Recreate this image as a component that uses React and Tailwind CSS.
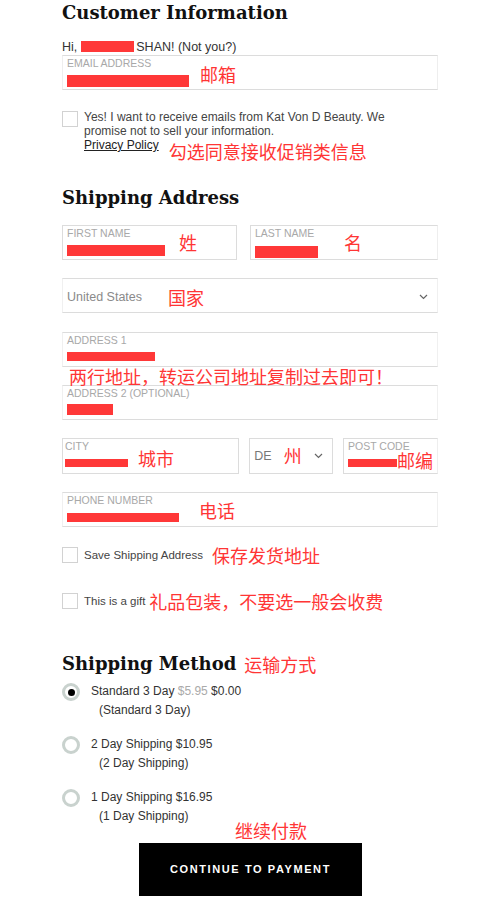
import React from 'react';

const cjk = { fontFamily: '"Noto Sans CJK SC", sans-serif' };

// red annotation written on top of the screenshot
const Note = ({ className = '', children }) => (
  <span className={`whitespace-nowrap text-[18px] leading-[18px] text-[#ff3535] shrink-0 ${className}`} style={cjk}>
    {children}
  </span>
);

// red redaction bar
const Bar = ({ className = '' }) => <span className={`inline-block bg-[#ff3838] shrink-0 ${className}`} />;

const Field = ({ label, className = '', rowClass = '', children }) => (
  <div className={`h-[35px] border border-[#dcdcdc] flex flex-col px-[4px] ${className}`}>
    {label && (
      <div className="pt-[1px] text-[10.5px] leading-[12px] uppercase text-[#a8a8a8] whitespace-nowrap">{label}</div>
    )}
    <div className={`flex-1 flex items-center ${rowClass}`}>{children}</div>
  </div>
);

const Chevron = ({ className = '' }) => (
  <svg className={`shrink-0 ${className}`} width="9" height="6" viewBox="0 0 9 6" fill="none">
    <path d="M1 1l3.5 3.5L8 1" stroke="#666" strokeWidth="1.2" />
  </svg>
);

const Checkbox = () => <span className="block w-[16px] h-[16px] border border-[#d2d2d2] bg-white shrink-0" />;

const Radio = ({ checked }) => (
  <span className="flex items-center justify-center w-[18px] h-[18px] rounded-full border-[3px] border-[#c9d2ce] shrink-0">
    {checked && <span className="block w-[7px] h-[7px] rounded-full bg-black" />}
  </span>
);

const Heading = ({ children, className = '' }) => (
  <h2
    className={`text-[18px] leading-[25px] font-bold text-[#111] whitespace-nowrap ${className}`}
    style={{ fontFamily: '"DejaVu Serif", serif' }}
  >
    {children}
  </h2>
);

const methods = [
  { name: 'Standard 3 Day', old: '$5.95', price: '$0.00', sub: '(Standard 3 Day)', checked: true },
  { name: '2 Day Shipping', price: '$10.95', sub: '(2 Day Shipping)' },
  { name: '1 Day Shipping', price: '$16.95', sub: '(1 Day Shipping)' },
];

export default function App() {
  return (
    <div
      className="w-[500px] h-[900px] bg-white overflow-hidden text-[#333]"
      style={{ fontFamily: '"Liberation Sans", Arial, sans-serif' }}
    >
      <div className="ml-[62px] w-[376px]">
        <Heading className="h-[27px]">Customer Information</Heading>

        {/* greeting */}
        <div className="mt-[12px] h-[16px] flex items-center text-[12.5px] leading-[15px] text-[#333] whitespace-nowrap">
          <span>Hi,</span>
          <Bar className="ml-[4px] mr-[2px] w-[53px] h-[11px] -mt-[2px]" />
          <span>SHAN! (Not you?)</span>
        </div>

        <Field label="Email Address" className="border-l-[#eee] border-r-[#eee]" rowClass="gap-[11px]">
          <Bar className="w-[122px] h-[12px] mt-[4px]" />
          <Note className="-mt-[11px]">邮箱</Note>
        </Field>

        {/* newsletter opt in */}
        <div className="mt-[20px] flex gap-[6px]">
          <div className="pt-[1px]"><Checkbox /></div>
          <div className="text-[12px] leading-[14px] text-[#444]">
            <p>Yes! I want to receive emails from Kat Von D Beauty. We</p>
            <p>promise not to sell your information.</p>
            <div className="flex items-start gap-[10px] h-[14px]">
              <span className="underline text-[#222]">Privacy Policy</span>
              <Note className="mt-[4px]">勾选同意接收促销类信息</Note>
            </div>
          </div>
        </div>

        <Heading className="mt-[33px] h-[25px]">Shipping Address</Heading>

        <div className="mt-[15px] flex gap-[13px]">
          <Field label="First Name" className="w-[175px]" rowClass="gap-[14px]">
            <Bar className="w-[98px] h-[11px] mt-[3px]" />
            <Note className="-mt-[15px]">姓</Note>
          </Field>
          <Field label="Last Name" className="flex-1 border-r-[#eee]" rowClass="gap-[26px]">
            <Bar className="w-[63px] h-[12px] mt-[6px]" />
            <Note className="-mt-[15px]">名</Note>
          </Field>
        </div>

        <Field className="mt-[18px] border-l-[#f0f0f0] border-r-[#f0f0f0]" rowClass="gap-[26px] pt-[2px] pr-[5px]">
          <span className="text-[12.5px] leading-[14px] text-[#8a8a8a]">United States</span>
          <Note>国家</Note>
          <Chevron className="ml-auto" />
        </Field>

        <Field label="Address 1" className="mt-[19px] border-l-[#f0f0f0] border-r-[#f0f0f0]">
          <Bar className="w-[88px] h-[9px]" />
        </Field>
        <Note className="block h-[18px] pl-[7px] leading-[17px]">两行地址，转运公司地址复制过去即可！</Note>
        <Field label="Address 2 (Optional)" className="border-l-[#f0f0f0] border-r-[#f0f0f0]">
          <Bar className="w-[46px] h-[11px]" />
        </Field>

        <div className="mt-[18px] flex gap-[10px]">
          <Field label="City" className="w-[178px] h-[36px] !pl-[2px]" rowClass="gap-[10px]">
            <Bar className="w-[63px] h-[8px]" />
            <Note className="-mt-[10px]">城市</Note>
          </Field>
          <Field className="w-[84px] h-[36px]" rowClass="gap-[12px] pr-[5px]">
            <span className="text-[12.5px] leading-[14px] text-[#777]">DE</span>
            <Note className="-mt-[2px]">州</Note>
            <Chevron className="ml-auto" />
          </Field>
          <Field label="Post Code" className="flex-1 h-[36px] border-r-[#eee]">
            <Bar className="w-[49px] h-[8px]" />
            <Note className="-mt-[6px]">邮编</Note>
          </Field>
        </div>

        <Field label="Phone Number" className="mt-[18px] border-l-[#f0f0f0] border-r-[#f0f0f0]" rowClass="gap-[20px]">
          <Bar className="w-[112px] h-[9px] mt-[2px]" />
          <Note className="-mt-[12px]">电话</Note>
        </Field>

        <div className="mt-[20px] flex items-center gap-[6px] h-[16px] whitespace-nowrap">
          <Checkbox />
          <span className="text-[11.5px] leading-[14px] text-[#444]">Save Shipping Address</span>
          <Note className="ml-[3px]">保存发货地址</Note>
        </div>

        <div className="mt-[30px] flex items-center gap-[6px] h-[16px] whitespace-nowrap">
          <Checkbox />
          <span className="text-[11.5px] leading-[14px] text-[#444]">This is a gift</span>
          <Note className="-ml-[2px]">礼品包装，不要选一般会收费</Note>
        </div>

        <div className="mt-[42px] flex items-center gap-[8px] h-[25px]">
          <Heading>Shipping Method</Heading>
          <Note>运输方式</Note>
        </div>

        <div className="mt-[7px] flex flex-col gap-[16px]">
          {methods.map((m) => (
            <div key={m.name} className="flex gap-[11px]">
              <Radio checked={m.checked} />
              <div className="text-[12px] leading-[19px] text-[#333] -mt-[1px] whitespace-nowrap">
                <p>
                  {m.name}{' '}
                  {m.old && <span className="text-[#aaa]">{m.old} </span>}
                  {m.price}
                </p>
                <p className="pl-[8px]">{m.sub}</p>
              </div>
            </div>
          ))}
        </div>
      </div>

      <div className="flex flex-col -mt-[5px]">
        <Note className="block h-[18px] ml-[235px]">继续付款</Note>
        <button className="ml-[139px] mt-[4px] w-[223px] h-[53px] bg-black flex items-center justify-center">
          <span className="text-white text-[11px] font-bold tracking-[1.6px] uppercase">Continue to Payment</span>
        </button>
      </div>
    </div>
  );
}
